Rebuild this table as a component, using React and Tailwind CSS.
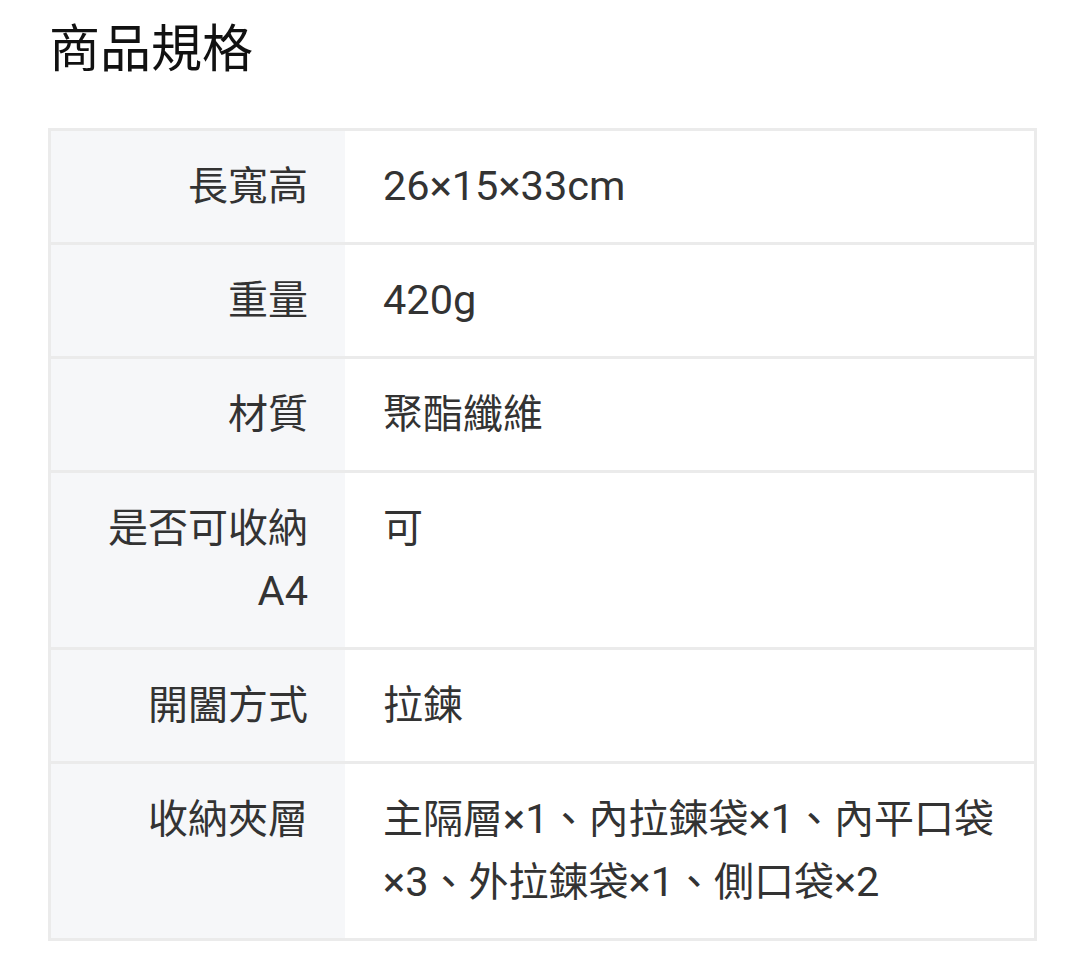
const specs = [
  { label: '長寬高', value: '26×15×33cm' },
  { label: '重量', value: '420g' },
  { label: '材質', value: '聚酯纖維' },
  { label: '是否可收納A4', value: '可' },
  { label: '開闔方式', value: '拉鍊' },
  { label: '收納夾層', value: '主隔層×1、內拉鍊袋×1、內平口袋×3、外拉鍊袋×1、側口袋×2' },
];

// Latin runs render a touch wider than the CJK ones in the reference
const Mixed = ({ text }) =>
  text.split(/([A-Za-z0-9×]+)/).map((part, i) =>
    /^[A-Za-z0-9×]+$/.test(part) ? (
      <span key={i} className="text-[41.5px] leading-none">{part}</span>
    ) : (
      part
    )
  );

export default function App() {
  return (
    <div
      className="min-h-screen bg-white pl-[48px] pt-[12px]"
      style={{ fontFamily: 'Roboto, "Noto Sans CJK TC", sans-serif' }}
    >
      {/* Section title */}
      <h2 className="text-[51px] leading-[76px] text-[#111] pl-[1px]">商品規格</h2>

      {/* Spec table */}
      <div className="mt-[40px] w-[989px] border-[3px] border-[#ebebeb]">
        {specs.map((row, i) => (
          <div
            key={row.label}
            className={`grid grid-cols-[294px_1fr] ${i > 0 ? 'border-t-[3px] border-[#ebebeb]' : ''}`}
          >
            <div className="bg-[#f6f7f9] py-[24px] pr-[37px] pl-[50px] text-right text-[40px] leading-[63px] text-[#333]">
              <Mixed text={row.label} />
            </div>
            <div className="py-[24px] pl-[38px] pr-[30px] text-[40px] leading-[63px] text-[#333]">
              <Mixed text={row.value} />
            </div>
          </div>
        ))}
      </div>
    </div>
  );
}
